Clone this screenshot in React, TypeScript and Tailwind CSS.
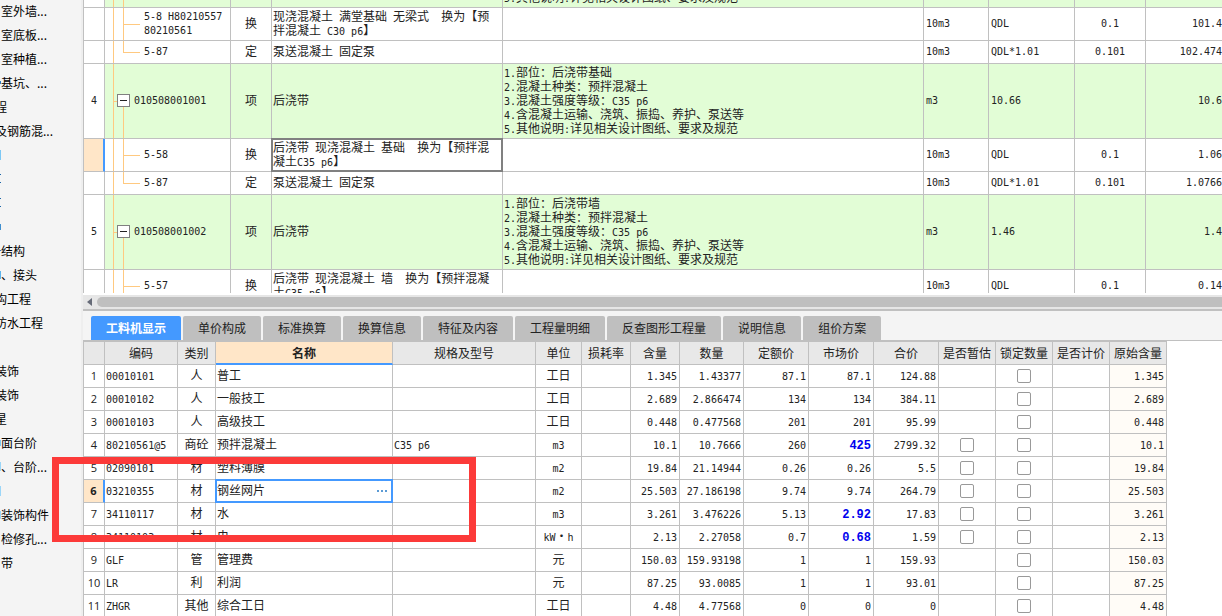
import { useState } from 'react'
import clsx from 'clsx'

type TreeItem = { text: string; level: 0 | 1; edge?: string }

const TREE: TreeItem[] = [
  { text: '室外墙...', level: 1 },
  { text: '室底板...', level: 1 },
  { text: '室种植...', level: 1 },
  { text: '基坑、...', level: 1, edge: 'h-[3px] bg-[#2b7cc4]' },
  { text: '程', level: 0 },
  { text: '及钢筋混...', level: 0 },
  { text: '', level: 0, edge: 'h-[10px] bg-[#7cc8f5]' },
  { text: '', level: 0, edge: 'h-[9px] border-y border-[#1b66a8]' },
  { text: '', level: 0, edge: 'h-[9px] border-y border-[#1b66a8]' },
  { text: '', level: 0, edge: 'h-[6px] bg-[#3f8fcf]' },
  { text: '结构', level: 1, edge: 'h-px bg-[#2b7cc4]' },
  { text: '、接头', level: 1, edge: 'h-[8px] bg-[#5db4ec]' },
  { text: '构工程', level: 0 },
  { text: '防水工程', level: 0 },
  { text: '', level: 0 },
  { text: '装饰', level: 0 },
  { text: '装饰', level: 0 },
  { text: '星', level: 0 },
  { text: '面台阶', level: 1, edge: 'h-[6px] bg-[#7cc8f5]' },
  { text: '、台阶...', level: 1, edge: 'h-[9px] bg-[#9bd6f8]' },
  { text: '', level: 0, edge: 'h-[10px] bg-[#9bd6f8]' },
  { text: '装饰构件', level: 1, edge: 'h-[8px] bg-[#9bd6f8]' },
  { text: '检修孔...', level: 1 },
  { text: '带', level: 1 },
]

type BillRow = {
  kind: 'item' | 'tall' | 'short' | 'cut'
  no?: string
  code?: string
  type?: string
  name?: string
  spec?: string
  unit?: string
  expr?: string
  rate?: string
  qty?: string
  last?: boolean
  selected?: boolean
}

const specOf = (part: string) =>
  `1.部位：${part}\n2.混凝土种类：预拌混凝土\n3.混凝土强度等级：C35 p6\n4.含混凝土运输、浇筑、振捣、养护、泵送等\n5.其他说明:详见相关设计图纸、要求及规范`

const BILL: BillRow[] = [
  { kind: 'cut', spec: '5.其他说明:详见相关设计图纸、要求及规范' },
  { kind: 'tall', code: '5-8 H80210557\n80210561', type: '换', name: '现浇混凝土 满堂基础 无梁式  换为【预\n拌混凝土 C30 p6】', unit: '10m3', expr: 'QDL', rate: '0.1', qty: '101.4' },
  { kind: 'short', code: '5-87', type: '定', name: '泵送混凝土 固定泵', unit: '10m3', expr: 'QDL*1.01', rate: '0.101', qty: '102.474', last: true },
  { kind: 'item', no: '4', code: '010508001001', type: '项', name: '后浇带', spec: specOf('后浇带基础'), unit: 'm3', expr: '10.66', qty: '10.6' },
  { kind: 'tall', code: '5-58', type: '换', name: '后浇带 现浇混凝土 基础  换为【预拌混\n凝土C35 p6】', unit: '10m3', expr: 'QDL', rate: '0.1', qty: '1.06', selected: true },
  { kind: 'short', code: '5-87', type: '定', name: '泵送混凝土 固定泵', unit: '10m3', expr: 'QDL*1.01', rate: '0.101', qty: '1.0766', last: true },
  { kind: 'item', no: '5', code: '010508001002', type: '项', name: '后浇带', spec: specOf('后浇带墙'), unit: 'm3', expr: '1.46', qty: '1.4' },
  { kind: 'tall', code: '5-57', type: '换', name: '后浇带 现浇混凝土 墙  换为【预拌混凝\n土C35 p6】', unit: '10m3', expr: 'QDL', rate: '0.1', qty: '0.14' },
]

const BILL_HEIGHT = {
  item: 'h-[74px]',
  tall: 'h-[32px]',
  short: 'h-[22px]',
  cut: 'h-[7px]',
}

const TABS = ['工料机显示', '单价构成', '标准换算', '换算信息', '特征及内容', '工程量明细', '反查图形工程量', '说明信息', '组价方案']

const HEADERS = [
  { label: '', width: 'w-[21px]' },
  { label: '编码', width: 'w-[73px]' },
  { label: '类别', width: 'w-[38px]' },
  { label: '名称', width: 'w-[177px]' },
  { label: '规格及型号', width: 'w-[143px]' },
  { label: '单位', width: 'w-[46px]' },
  { label: '损耗率', width: 'w-[49px]' },
  { label: '含量', width: 'w-[49px]' },
  { label: '数量', width: 'w-[64px]' },
  { label: '定额价', width: 'w-[65px]' },
  { label: '市场价', width: 'w-[65px]' },
  { label: '合价', width: 'w-[65px]' },
  { label: '是否暂估', width: 'w-[57px]' },
  { label: '锁定数量', width: 'w-[57px]' },
  { label: '是否计价', width: 'w-[57px]' },
  { label: '原始含量', width: 'w-[57px]' },
]

type Resource = {
  code: string
  type: string
  name: string
  spec?: string
  unit: string
  content: string
  qty: string
  base: string
  market: string
  total: string
  estimate?: boolean
  changed?: boolean
}

const RESOURCES: Resource[] = [
  { code: '00010101', type: '人', name: '普工', unit: '工日', content: '1.345', qty: '1.43377', base: '87.1', market: '87.1', total: '124.88' },
  { code: '00010102', type: '人', name: '一般技工', unit: '工日', content: '2.689', qty: '2.866474', base: '134', market: '134', total: '384.11' },
  { code: '00010103', type: '人', name: '高级技工', unit: '工日', content: '0.448', qty: '0.477568', base: '201', market: '201', total: '95.99' },
  { code: '80210561@5', type: '商砼', name: '预拌混凝土', spec: 'C35 p6', unit: 'm3', content: '10.1', qty: '10.7666', base: '260', market: '425', total: '2799.32', estimate: true, changed: true },
  { code: '02090101', type: '材', name: '塑料薄膜', unit: 'm2', content: '19.84', qty: '21.14944', base: '0.26', market: '0.26', total: '5.5', estimate: true },
  { code: '03210355', type: '材', name: '钢丝网片', unit: 'm2', content: '25.503', qty: '27.186198', base: '9.74', market: '9.74', total: '264.79', estimate: true },
  { code: '34110117', type: '材', name: '水', unit: 'm3', content: '3.261', qty: '3.476226', base: '5.13', market: '2.92', total: '17.83', estimate: true, changed: true },
  { code: '34110103', type: '材', name: '电', unit: 'kW·h', content: '2.13', qty: '2.27058', base: '0.7', market: '0.68', total: '1.59', estimate: true, changed: true },
  { code: 'GLF', type: '管', name: '管理费', unit: '元', content: '150.03', qty: '159.93198', base: '1', market: '1', total: '159.93' },
  { code: 'LR', type: '利', name: '利润', unit: '元', content: '87.25', qty: '93.0085', base: '1', market: '1', total: '93.01' },
  { code: 'ZHGR', type: '其他', name: '综合工日', unit: '工日', content: '4.48', qty: '4.77568', base: '0', market: '0', total: '0' },
]

const SELECTED = 5

// Latin runs are set in a half-width mono face next to the full-width Chinese.
function Mixed({ children = '' }: { children?: string }) {
  return (
    <>
      {children.split(/([\x20-\x7e]+)/).map((run, i) =>
        i % 2 ? (
          <span key={i} className="font-['DejaVu_Sans_Mono','Liberation_Mono',monospace] text-[10px] leading-none">
            {run}
          </span>
        ) : (
          run
        ),
      )}
    </>
  )
}

function Sidebar() {
  return (
    <aside className="w-[83px] shrink-0 overflow-hidden border-r-2 border-[#eeeeee] bg-[#f4f4f4] text-black">
      <ul>
        {TREE.map((item, i) => (
          <li key={i} className="flex h-6 items-center pb-[3px] whitespace-nowrap">
            {item.edge && <span className={clsx('w-px shrink-0', item.edge)} />}
            <span className={clsx(item.level === 0 ? '-ml-[5px]' : !item.edge && 'ml-px')}>{item.text}</span>
          </li>
        ))}
      </ul>
    </aside>
  )
}

function Branch({ row }: { row: BillRow }) {
  const item = row.kind === 'item'
  return (
    <svg
      className={clsx('h-full shrink-0', item ? 'w-[29px]' : 'w-[39px]')}
      stroke="#ffc980"
      shapeRendering="crispEdges"
      aria-hidden="true"
    >
      <line x1="8.5" x2="8.5" y1="0" y2="100%" />
      <line x1="18.5" x2="18.5" y1={item ? '50%' : '0'} y2={row.last ? '50%' : '100%'} />
      {item && <line x1="8" x2="12" y1="50%" y2="50%" />}
      {(row.kind === 'tall' || row.kind === 'short') && <line x1="18" x2="35" y1="50%" y2="50%" />}
      {item && (
        <svg y="30" width="26" height="13" stroke="#808080">
          <rect x="12.5" y="0.5" width="12" height="12" fill="#fff" />
          <path d="M15 6.5h7" stroke="#222" />
        </svg>
      )}
    </svg>
  )
}

function BillTable() {
  const cell = 'border-r border-b border-[#c0c0c0] p-0 whitespace-pre'
  return (
    <div className="h-[293px] shrink-0 overflow-hidden">
      <table className="w-full table-fixed border-separate border-spacing-0 border-l border-[#c0c0c0]">
        <colgroup>
          <col className="w-[21px]" />
          <col className="w-[126px]" />
          <col className="w-[41px]" />
          <col className="w-[231px]" />
          <col className="w-[421px]" />
          <col className="w-[65px]" />
          <col className="w-[86px]" />
          <col className="w-[71px]" />
          <col />
        </colgroup>
        <tbody>
          {BILL.map((row, i) => {
            const cut = row.kind === 'cut'
            // text sits a little above the middle of its row
            const lift = !cut && 'pb-[2px]'
            const liftMono = !cut && 'pb-[4px]'
            return (
              <tr key={i} className={clsx((row.kind === 'item' || cut) && 'bg-[#e2fdd6]')}>
                <td
                  className={clsx(
                    cell,
                    liftMono,
                    'text-center',
                    row.selected ? 'border-r-2 border-r-[#4499ff] bg-[#ffe6c8]' : 'bg-white',
                  )}
                >
                  {row.no && <Mixed>{row.no}</Mixed>}
                </td>
                <td className={cell}>
                  <div className={clsx('flex items-center', BILL_HEIGHT[row.kind])}>
                    <Branch row={row} />
                    <span className={clsx(liftMono)}>
                      <Mixed>{row.code}</Mixed>
                    </span>
                  </div>
                </td>
                <td className={clsx(cell, lift, 'text-center')}>{row.type}</td>
                <td className={clsx(cell, lift, 'relative pl-px')}>
                  {row.selected && <span className="absolute -inset-px border-2 border-[#808080]" />}
                  <Mixed>{row.name}</Mixed>
                </td>
                <td className={clsx(cell, lift, 'pl-px')}>
                  <div className={clsx('flex', cut ? 'h-[7px] items-end overflow-hidden pb-[3px]' : 'items-center')}>
                    <span>
                      <Mixed>{row.spec}</Mixed>
                    </span>
                  </div>
                </td>
                <td className={clsx(cell, liftMono, 'pl-[2px]')}>
                  <Mixed>{row.unit}</Mixed>
                </td>
                <td className={clsx(cell, liftMono, 'pl-[2px]')}>
                  <Mixed>{row.expr}</Mixed>
                </td>
                <td className={clsx(cell, liftMono, 'text-center')}>
                  <Mixed>{row.rate}</Mixed>
                </td>
                <td className={clsx('border-b border-[#c0c0c0] p-0 text-right', liftMono)}>
                  <Mixed>{row.qty}</Mixed>
                </td>
              </tr>
            )
          })}
        </tbody>
      </table>
    </div>
  )
}

function ScrollBar() {
  return (
    <div className="mt-[2px] flex h-[14px] shrink-0 items-center gap-[5px] bg-[#e6e6e6] pl-1">
      <svg width="5" height="8" viewBox="0 0 5 8" fill="#666b78" aria-hidden="true">
        <path d="M5 0v8L0 4z" />
      </svg>
      <div className="h-[10px] flex-1 rounded-l-full bg-[#bfbfbf]" />
    </div>
  )
}

function Check({ label }: { label: string }) {
  return (
    <input
      type="checkbox"
      aria-label={label}
      className="mx-auto block size-[14px] appearance-none rounded-[2px] border border-[#999999] bg-white checked:bg-[#4499ff]"
    />
  )
}

function ResourceTable() {
  const cell = 'border-r border-b border-[#c0c0c0] p-0 whitespace-pre'
  const text = clsx(cell, 'pb-[2px]')
  const left = clsx(text, 'pl-px')
  const center = clsx(text, 'text-center')
  const right = clsx(text, 'pr-[2px] text-right')
  return (
    <table className="w-[1084px] table-fixed border-separate border-spacing-0 border-t border-l border-[#c0c0c0] bg-white">
      <thead>
        <tr className="h-[23px]">
          {HEADERS.map((h) => (
            <th
              key={h.label}
              className={clsx(
                cell,
                h.width,
                h.label === '名称'
                  ? 'border-b-2 border-b-[#4499ff] bg-[#ffe6c8] font-bold'
                  : 'bg-[#e8e8e8] font-normal',
              )}
            >
              {h.label}
            </th>
          ))}
        </tr>
      </thead>
      <tbody>
        {RESOURCES.map((r, i) => (
          <tr key={r.code} className="h-[23px]">
            <td
              className={clsx(
                cell,
                "text-center font-['Open_Sans','Noto_Sans',sans-serif] text-[11px]",
                i === SELECTED && 'border-r-2 border-r-[#4499ff] bg-[#ffe6c8] font-bold',
              )}
            >
              {i + 1}
            </td>
            <td className={left}><Mixed>{r.code}</Mixed></td>
            <td className={center}>{r.type}</td>
            {i === SELECTED ? (
              <td className={clsx(cell, 'relative')}>
                <div className="absolute -inset-px flex items-center border-2 border-[#4499ff] bg-white pr-1">
                  <input aria-label="名称" defaultValue={r.name} className="w-0 flex-1 bg-transparent pb-[2px] outline-none" />
                  <button aria-label="选择" className="shrink-0">
                    <svg width="10" height="2" fill="#5b9bd5" aria-hidden="true">
                      <path d="M0 0h2v2H0zM4 0h2v2H4zM8 0h2v2H8z" />
                    </svg>
                  </button>
                </div>
              </td>
            ) : (
              <td className={left}>{r.name}</td>
            )}
            <td className={left}><Mixed>{r.spec}</Mixed></td>
            <td className={center}><Mixed>{r.unit}</Mixed></td>
            <td className={cell} />
            <td className={right}><Mixed>{r.content}</Mixed></td>
            <td className={right}><Mixed>{r.qty}</Mixed></td>
            <td className={right}><Mixed>{r.base}</Mixed></td>
            <td className={right}>
              {r.changed ? (
                <b className="font-['Liberation_Mono',monospace] leading-none text-[#0000ee]">{r.market}</b>
              ) : (
                <Mixed>{r.market}</Mixed>
              )}
            </td>
            <td className={right}><Mixed>{r.total}</Mixed></td>
            <td className={cell}>{r.estimate && <Check label="是否暂估" />}</td>
            <td className={cell}><Check label="锁定数量" /></td>
            <td className={cell} />
            <td className={clsx(right, 'bg-[#fffcf7]')}><Mixed>{r.content}</Mixed></td>
          </tr>
        ))}
      </tbody>
    </table>
  )
}

export default function App() {
  const [tab, setTab] = useState(TABS[0])

  return (
    <div className="relative flex h-screen overflow-hidden bg-white font-['Noto_Sans_CJK_SC',sans-serif] text-[12px] leading-[14px] text-[#222222]">
      <Sidebar />

      <main className="flex min-w-0 flex-1 flex-col overflow-hidden">
        <BillTable />
        <ScrollBar />

        <div role="tablist" className="flex shrink-0 gap-[2px] border-t-2 border-b border-[#c0c0c0] bg-[#f4f4f4] pt-[5px] pl-2">
          {TABS.map((name) => (
            <button
              key={name}
              role="tab"
              aria-selected={name === tab}
              onClick={() => setTab(name)}
              className={clsx(
                'h-6 rounded-t-[2px] px-[15px] whitespace-nowrap',
                name === tab ? 'bg-[#4499ff] font-bold text-white' : 'bg-[#bfbfbf]',
              )}
            >
              {name}
            </button>
          ))}
        </div>

        <div className="min-h-0 flex-1 overflow-hidden">
          <ResourceTable />
        </div>
      </main>

      <div className="pointer-events-none absolute top-[457px] left-[52px] h-[85px] w-[424px] border-[7px] border-[#fc3a39]" />
    </div>
  )
}
